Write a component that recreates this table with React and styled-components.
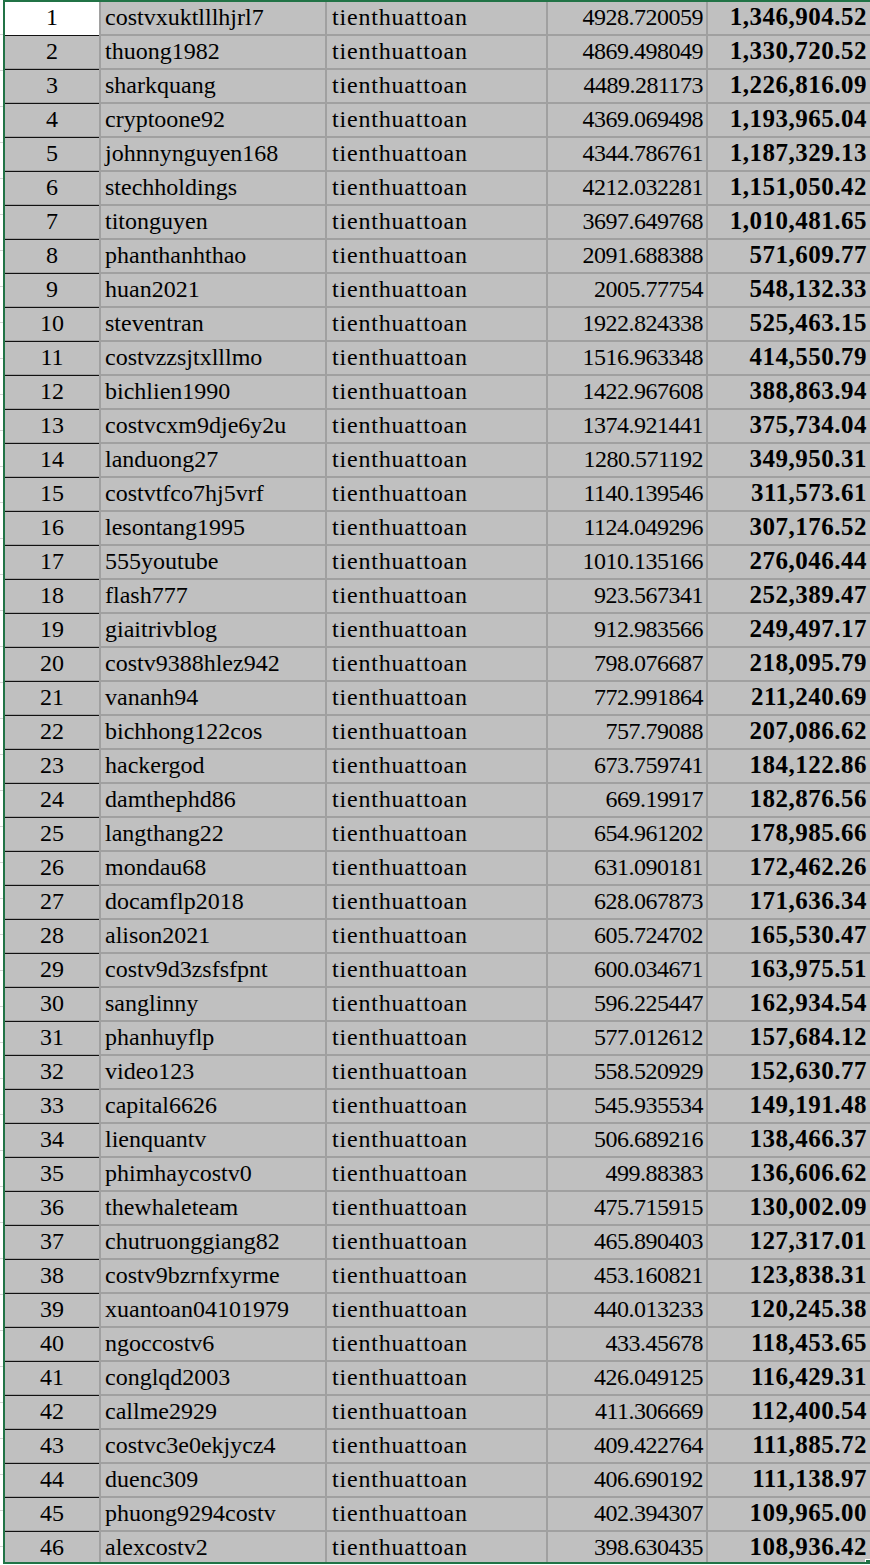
import * as React from 'react'
import styled, { createGlobalStyle } from 'styled-components'

const GlobalStyle = createGlobalStyle`
	html, body {
		margin: 0;
		padding: 0;
		background: #ffffff;
	}
	body {
		font-family: "Liberation Serif", "Times New Roman", serif;
		color: #000;
	}
`

const rows = [
	['costvxuktlllhjrl7', '4928.720059', '1,346,904.52'],
	['thuong1982', '4869.498049', '1,330,720.52'],
	['sharkquang', '4489.281173', '1,226,816.09'],
	['cryptoone92', '4369.069498', '1,193,965.04'],
	['johnnynguyen168', '4344.786761', '1,187,329.13'],
	['stechholdings', '4212.032281', '1,151,050.42'],
	['titonguyen', '3697.649768', '1,010,481.65'],
	['phanthanhthao', '2091.688388', '571,609.77'],
	['huan2021', '2005.77754', '548,132.33'],
	['steventran', '1922.824338', '525,463.15'],
	['costvzzsjtxlllmo', '1516.963348', '414,550.79'],
	['bichlien1990', '1422.967608', '388,863.94'],
	['costvcxm9dje6y2u', '1374.921441', '375,734.04'],
	['landuong27', '1280.571192', '349,950.31'],
	['costvtfco7hj5vrf', '1140.139546', '311,573.61'],
	['lesontang1995', '1124.049296', '307,176.52'],
	['555youtube', '1010.135166', '276,046.44'],
	['flash777', '923.567341', '252,389.47'],
	['giaitrivblog', '912.983566', '249,497.17'],
	['costv9388hlez942', '798.076687', '218,095.79'],
	['vananh94', '772.991864', '211,240.69'],
	['bichhong122cos', '757.79088', '207,086.62'],
	['hackergod', '673.759741', '184,122.86'],
	['damthephd86', '669.19917', '182,876.56'],
	['langthang22', '654.961202', '178,985.66'],
	['mondau68', '631.090181', '172,462.26'],
	['docamflp2018', '628.067873', '171,636.34'],
	['alison2021', '605.724702', '165,530.47'],
	['costv9d3zsfsfpnt', '600.034671', '163,975.51'],
	['sanglinny', '596.225447', '162,934.54'],
	['phanhuyflp', '577.012612', '157,684.12'],
	['video123', '558.520929', '152,630.77'],
	['capital6626', '545.935534', '149,191.48'],
	['lienquantv', '506.689216', '138,466.37'],
	['phimhaycostv0', '499.88383', '136,606.62'],
	['thewhaleteam', '475.715915', '130,002.09'],
	['chutruonggiang82', '465.890403', '127,317.01'],
	['costv9bzrnfxyrme', '453.160821', '123,838.31'],
	['xuantoan04101979', '440.013233', '120,245.38'],
	['ngoccostv6', '433.45678', '118,453.65'],
	['conglqd2003', '426.049125', '116,429.31'],
	['callme2929', '411.306669', '112,400.54'],
	['costvc3e0ekjycz4', '409.422764', '111,885.72'],
	['duenc309', '406.690192', '111,138.97'],
	['phuong9294costv', '402.394307', '109,965.00'],
	['alexcostv2', '398.630435', '108,936.42'],
]

const GRID = '#a0a0a0'
const CELL_BG = '#c0c0c0'
const GREEN = '#217346'

const Page = styled.div`
	display: flex;
	width: 870px;
	height: 1565px;
	overflow: hidden;
`

const LeftStrip = styled.div`
	flex: 0 0 3px;
	height: 1562px;
	background: repeating-linear-gradient(
		to bottom,
		#ffffff 0 34px,
		#d4d4d4 34px 35px,
		#ffffff 35px 36px
	);
`

const Selection = styled.div`
	position: relative;
	flex: 1 1 auto;
	height: 1560px;
	border-top: 2px solid ${GREEN};
	border-left: 2px solid ${GREEN};
	border-bottom: 2px solid ${GREEN};
	overflow: hidden;
`

const FillHandle = styled.span`
	position: absolute;
	right: 0;
	bottom: -2px;
	width: 4px;
	height: 4px;
	background: ${GREEN};
	box-shadow: 0 0 0 1px #fff;
`

const Sheet = styled.div`
	display: grid;
	grid-template-columns: 96px 226px 221px 160px 165px;
	grid-auto-rows: 34px;
`

const Cell = styled.div`
	height: 34px;
	box-sizing: border-box;
	padding: 0 ${(p) => p.$pr || 0}px 2px ${(p) => p.$pl || 0}px;
	line-height: 30px;
	font-size: ${(p) => (p.$bold ? 25 : 24)}px;
	letter-spacing: ${(p) => p.$ls || 0}px;
	font-weight: ${(p) => (p.$bold ? 700 : 400)};
	text-align: ${(p) => p.$align || 'left'};
	white-space: nowrap;
	overflow: hidden;
	background: ${CELL_BG};
	border-right: 2px solid ${GRID};
	border-bottom: 2px solid ${GRID};
`

const IndexCell = styled(Cell)`
	border-bottom: none;
	text-align: center;
	background: linear-gradient(
		to bottom,
		${(p) => (p.$active ? '#ffffff' : CELL_BG)} 0 32px,
		${(p) => (p.$active ? '#ffffff' : GRID)} 32px 33px,
		#111 33px 34px
	);
`

const SheetRow = ({ index, name, value, total }) => (
	<React.Fragment>
		<IndexCell $active={index === 1}>{index}</IndexCell>
		<Cell $pl={4}>{name}</Cell>
		<Cell $pl={5} $ls={0.8}>
			tienthuattoan
		</Cell>
		<Cell $align="right" $pr={3} $ls={-0.5}>
			{value}
		</Cell>
		<Cell $align="right" $pr={4} $ls={0.5} $bold>
			{total}
		</Cell>
	</React.Fragment>
)

const App = () => (
	<React.Fragment>
		<GlobalStyle />
		<Page>
			<LeftStrip />
			<Selection>
				<Sheet>
					{rows.map(([name, value, total], i) => (
						<SheetRow
							key={name}
							index={i + 1}
							name={name}
							value={value}
							total={total}
						/>
					))}
				</Sheet>
				<FillHandle />
			</Selection>
		</Page>
	</React.Fragment>
)

export default App
